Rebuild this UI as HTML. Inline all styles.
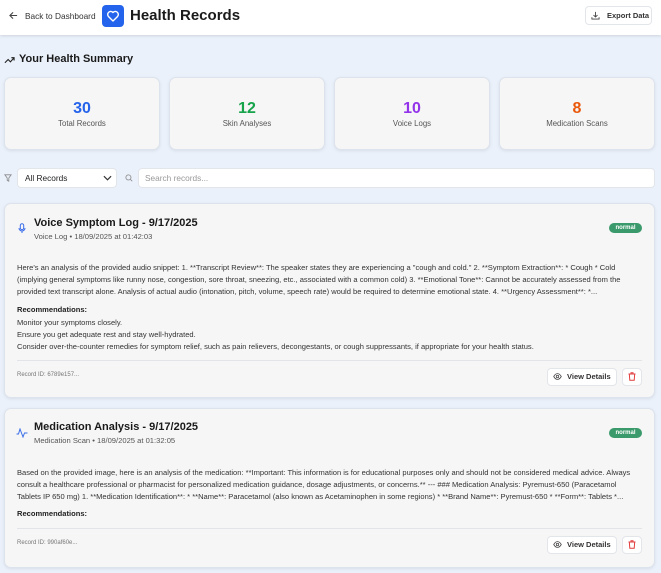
<!DOCTYPE html>
<html><head><meta charset="utf-8"><style>
*{margin:0;padding:0;box-sizing:border-box}
body{width:661px;height:573px;overflow:hidden;background:#eaf1fb;font-family:"Liberation Sans","DejaVu Sans",sans-serif;color:#222;position:relative}
.a{position:absolute;white-space:nowrap}
.hdr{position:absolute;left:0;top:0;width:661px;height:35px;background:#fff;box-shadow:0 1px 3px rgba(0,0,0,.12)}
.card{position:absolute;background:#f6f6f7;border:1px solid #dde3ec;border-radius:7px;box-shadow:0 1px 3px rgba(0,0,0,.08)}
.num{position:absolute;left:0;right:0;top:22px;text-align:center;font-weight:bold;font-size:16px}
.lbl{position:absolute;left:0;right:0;top:41px;text-align:center;font-size:7.8px;color:#555}
.t{font-size:7.55px;color:#333;line-height:12px}
.btn{position:absolute;background:#fff;border:1px solid #e2e5ea;border-radius:4px}
.badge{position:absolute;background:#3b9a6b;color:#fff;font-size:6px;font-weight:bold;border-radius:6px;text-align:center;line-height:10px}
</style></head><body>
<div class="hdr"></div>
<svg class="a" style="left:9px;top:11px" width="9" height="9" viewBox="0 0 10 10"><path d="M9 5H1M4.5 1.5L1 5l3.5 3.5" stroke="#444" stroke-width="1.2" fill="none"/></svg>
<div class="a" style="left:25px;top:11px;font-size:8.3px;color:#333">Back to Dashboard</div>
<div class="a" style="left:102px;top:5px;width:22px;height:22px;background:#2463eb;border-radius:4px"></div>
<svg class="a" style="left:106px;top:9px" width="14" height="14" viewBox="0 0 24 24"><path d="M12 20.5l-7.8-7.6A5 5 0 0 1 12 6a5 5 0 0 1 7.8 6.9z" stroke="#fff" stroke-width="2.4" fill="none" stroke-linejoin="round"/></svg>
<div class="a" style="left:130px;top:7px;font-size:15px;font-weight:bold;color:#1a1a1a">Health Records</div>
<div class="btn" style="left:585px;top:6px;width:67px;height:19px"></div>
<svg class="a" style="left:591px;top:11px" width="9" height="9" viewBox="0 0 10 10"><path d="M5 1v5.5M2.8 4.5L5 6.7l2.2-2.2M1 7v2h8V7" stroke="#444" stroke-width="1" fill="none"/></svg>
<div class="a" style="left:607px;top:11px;font-size:7.5px;font-weight:bold;color:#333">Export Data</div>

<svg class="a" style="left:4px;top:56px" width="11" height="8" viewBox="0 0 12 8"><path d="M1 7l3.5-3.5 2.5 2.5L11 1.5M8 1.5h3v3" stroke="#222" stroke-width="1.2" fill="none"/></svg>
<div class="a" style="left:19px;top:53px;font-size:11px;font-weight:bold;color:#1a1a1a">Your Health Summary</div>

<div class="card" style="left:4px;top:77px;width:156px;height:73px"><div class="num" style="color:#2563eb">30</div><div class="lbl">Total Records</div></div>
<div class="card" style="left:169px;top:77px;width:156px;height:73px"><div class="num" style="color:#16a34a">12</div><div class="lbl">Skin Analyses</div></div>
<div class="card" style="left:334px;top:77px;width:156px;height:73px"><div class="num" style="color:#9333ea">10</div><div class="lbl">Voice Logs</div></div>
<div class="card" style="left:499px;top:77px;width:156px;height:73px"><div class="num" style="color:#ea580c">8</div><div class="lbl">Medication Scans</div></div>

<svg class="a" style="left:4px;top:174px" width="8" height="8" viewBox="0 0 10 10"><path d="M1 1h8L6 5v4L4 8V5z" stroke="#888" stroke-width="1" fill="none"/></svg>
<div class="btn" style="left:17px;top:168px;width:100px;height:20px"></div>
<div class="a" style="left:25px;top:173px;font-size:8.3px;color:#222">All Records</div>
<svg class="a" style="left:103px;top:175px" width="9" height="6" viewBox="0 0 10 6"><path d="M1 1l4 4 4-4" stroke="#333" stroke-width="1.3" fill="none"/></svg>
<svg class="a" style="left:125px;top:174px" width="8" height="8" viewBox="0 0 10 10"><circle cx="4.3" cy="4.3" r="3.2" stroke="#888" fill="none"/><path d="M6.7 6.7L9 9" stroke="#888"/></svg>
<div class="btn" style="left:138px;top:168px;width:517px;height:20px"></div>
<div class="a" style="left:145px;top:173px;font-size:8.3px;color:#999">Search records...</div>

<div class="card" style="left:4px;top:203px;width:651px;height:195px"></div>
<svg class="a" style="left:18px;top:223px" width="8" height="11" viewBox="0 0 8 11"><rect x="2.3" y="0.7" width="3.4" height="6" rx="1.7" stroke="#3b6ee8" fill="none"/><path d="M1 5a3 3 0 0 0 6 0M4 8v2" stroke="#3b6ee8" fill="none"/></svg>
<div class="a" style="left:34px;top:217px;font-size:11px;font-weight:bold;color:#1a1a1a">Voice Symptom Log - 9/17/2025</div>
<div class="a" style="left:34px;top:232px;font-size:7.6px;color:#555">Voice Log • 18/09/2025 at 01:42:03</div>
<div class="badge" style="left:609px;top:223px;width:33px;height:10px">normal</div>
<div class="a t" style="left:17px;top:262px">Here's an analysis of the provided audio snippet: 1. **Transcript Review**: The speaker states they are experiencing a "cough and cold." 2. **Symptom Extraction**: * Cough * Cold</div>
<div class="a t" style="left:17px;top:274px">(implying general symptoms like runny nose, congestion, sore throat, sneezing, etc., associated with a common cold) 3. **Emotional Tone**: Cannot be accurately assessed from the</div>
<div class="a t" style="left:17px;top:286px">provided text transcript alone. Analysis of actual audio (intonation, pitch, volume, speech rate) would be required to determine emotional state. 4. **Urgency Assessment**: *...</div>
<div class="a t" style="left:17px;top:304px;font-weight:bold;color:#222">Recommendations:</div>
<div class="a t" style="left:17px;top:317px">Monitor your symptoms closely.</div>
<div class="a t" style="left:17px;top:329px">Ensure you get adequate rest and stay well-hydrated.</div>
<div class="a t" style="left:17px;top:341px">Consider over-the-counter remedies for symptom relief, such as pain relievers, decongestants, or cough suppressants, if appropriate for your health status.</div>
<div class="a" style="left:17px;top:360px;width:625px;height:1px;background:#e2e4e8"></div>
<div class="a" style="left:17px;top:372px;font-size:6px;color:#777">Record ID: 6789e157...</div>
<div class="btn" style="left:547px;top:368px;width:70px;height:18px"></div>
<svg class="a" style="left:553px;top:373px" width="9" height="7" viewBox="0 0 10 8"><path d="M.7 4C2 1.6 3.5.7 5 .7S8 1.6 9.3 4C8 6.4 6.5 7.3 5 7.3S2 6.4.7 4z" stroke="#444" stroke-width=".9" fill="none"/><circle cx="5" cy="4" r="1.4" stroke="#444" stroke-width=".9" fill="none"/></svg>
<div class="a" style="left:567px;top:372px;font-size:7.5px;font-weight:bold;color:#333">View Details</div>
<div class="btn" style="left:622px;top:368px;width:20px;height:18px"></div>
<svg class="a" style="left:628px;top:372px" width="8" height="9" viewBox="0 0 8 9"><path d="M.5 2h7M3 2V.8h2V2M1.3 2l.5 6.3h4.4L6.7 2" stroke="#e23b3b" fill="none"/></svg>

<div class="card" style="left:4px;top:408px;width:651px;height:160px"></div>
<svg class="a" style="left:16px;top:428px" width="12" height="10" viewBox="0 0 12 10"><path d="M.5 6h2l1.5-5 3 8 1.5-4h3" stroke="#3b6ee8" fill="none"/></svg>
<div class="a" style="left:34px;top:421px;font-size:11px;font-weight:bold;color:#1a1a1a">Medication Analysis - 9/17/2025</div>
<div class="a" style="left:34px;top:436px;font-size:7.6px;color:#555">Medication Scan • 18/09/2025 at 01:32:05</div>
<div class="badge" style="left:609px;top:428px;width:33px;height:10px">normal</div>
<div class="a t" style="left:17px;top:467px">Based on the provided image, here is an analysis of the medication: **Important: This information is for educational purposes only and should not be considered medical advice. Always</div>
<div class="a t" style="left:17px;top:479px">consult a healthcare professional or pharmacist for personalized medication guidance, dosage adjustments, or concerns.** --- ### Medication Analysis: Pyremust-650 (Paracetamol</div>
<div class="a t" style="left:17px;top:491px">Tablets IP 650 mg) 1. **Medication Identification**: * **Name**: Paracetamol (also known as Acetaminophen in some regions) * **Brand Name**: Pyremust-650 * **Form**: Tablets *...</div>
<div class="a t" style="left:17px;top:508px;font-weight:bold;color:#222">Recommendations:</div>
<div class="a" style="left:17px;top:528px;width:625px;height:1px;background:#e2e4e8"></div>
<div class="a" style="left:17px;top:540px;font-size:6px;color:#777">Record ID: 990af60e...</div>
<div class="btn" style="left:547px;top:536px;width:70px;height:18px"></div>
<svg class="a" style="left:553px;top:541px" width="9" height="7" viewBox="0 0 10 8"><path d="M.7 4C2 1.6 3.5.7 5 .7S8 1.6 9.3 4C8 6.4 6.5 7.3 5 7.3S2 6.4.7 4z" stroke="#444" stroke-width=".9" fill="none"/><circle cx="5" cy="4" r="1.4" stroke="#444" stroke-width=".9" fill="none"/></svg>
<div class="a" style="left:567px;top:540px;font-size:7.5px;font-weight:bold;color:#333">View Details</div>
<div class="btn" style="left:622px;top:536px;width:20px;height:18px"></div>
<svg class="a" style="left:628px;top:540px" width="8" height="9" viewBox="0 0 8 9"><path d="M.5 2h7M3 2V.8h2V2M1.3 2l.5 6.3h4.4L6.7 2" stroke="#e23b3b" fill="none"/></svg>
</body></html>
